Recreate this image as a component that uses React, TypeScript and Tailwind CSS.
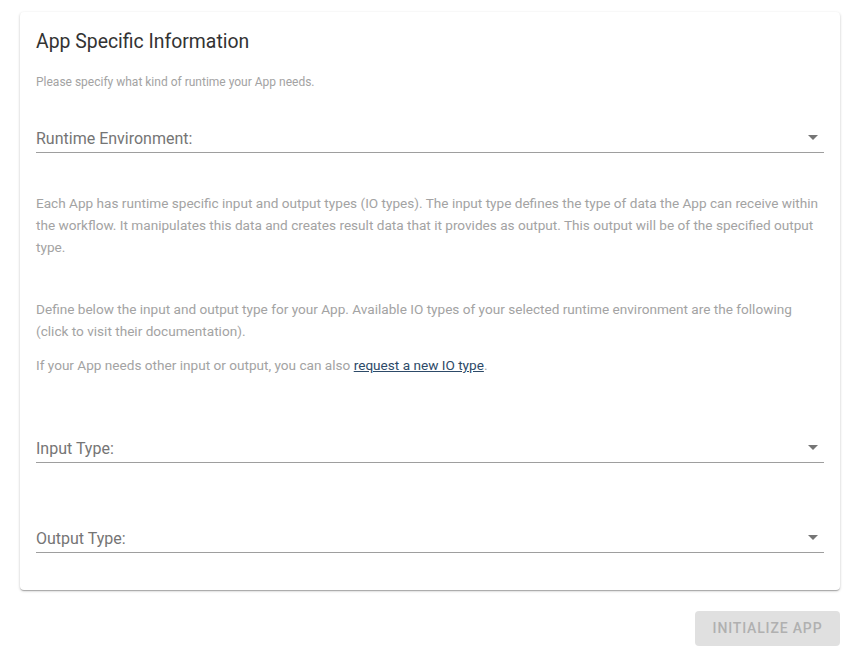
import React from "react";

const DropArrow = () => (
  <svg viewBox="0 0 24 24" className="h-6 w-6 -mt-1 -mr-[1px] fill-[#757575]">
    <path d="M7 10l5 5 5-5z" />
  </svg>
);

const SelectField = ({ label, className }: { label: string; className: string }) => (
  <div className={`flex items-center justify-between border-b border-[#9e9e9e] pb-[3px] ${className}`}>
    <span className="text-[16px] leading-[20px] text-[#757575]">{label}</span>
    <DropArrow />
  </div>
);

const App = () => {
  return (
    <div className="min-h-screen bg-white pt-3 pl-5 pr-[10px] font-['Roboto',sans-serif]">
      <div className="rounded bg-white px-4 pt-4 pb-[37px] shadow-[0_1px_3px_0_rgba(0,0,0,0.2),0_1px_1px_0_rgba(0,0,0,0.14),0_2px_1px_-1px_rgba(0,0,0,0.12)]">
        <h2 className="text-[19.4px] leading-[28px] text-[#333333]">App Specific Information</h2>
        <p className="mt-4 text-[12px] leading-[20px] text-[#a3a3a3]">
          Please specify what kind of runtime your App needs.
        </p>

        <SelectField label="Runtime Environment:" className="mt-[37px] h-6" />

        <p className="mt-[39px] text-[13.6px] leading-[22px] text-[#a3a3a3]">
          Each App has runtime specific input and output types (IO types). The input type defines the
          type of data the App can receive within the workflow. It manipulates this data and creates
          result data that it provides as output. This output will be of the specified output type.
        </p>
        <p className="mt-10 text-[13.6px] leading-[22px] text-[#a3a3a3]">
          Define below the input and output type for your App. Available IO types of your selected
          runtime environment are the following (click to visit their documentation).
        </p>
        <p className="mt-3 text-[13.6px] leading-[22px] text-[#a3a3a3]">
          If your App needs other input or output, you can also{" "}
          <a href="#" className="text-[#2d4a68] underline">
            request a new IO type
          </a>
          .
        </p>

        <SelectField label="Input Type:" className="mt-[63px] h-6" />
        <SelectField label="Output Type:" className="mt-[66px] h-6" />
      </div>

      <div className="mt-[21px] flex justify-end">
        <button
          disabled
          className="h-[35px] w-[145px] rounded bg-[#e0e0e0] text-[14px] font-medium uppercase tracking-[0.06em] text-[#b0b0b0]"
        >
          Initialize App
        </button>
      </div>
    </div>
  );
};

export default App;
